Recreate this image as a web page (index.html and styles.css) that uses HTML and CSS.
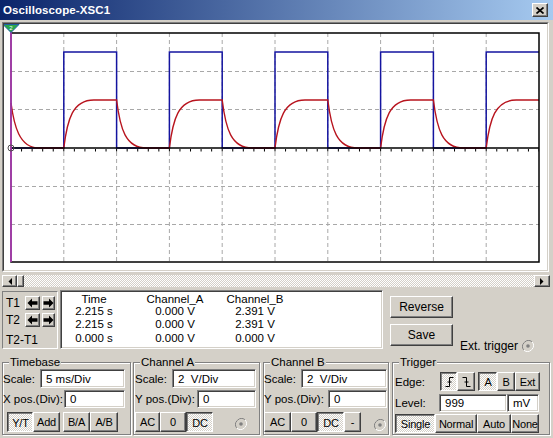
FILE: index.html
```html
<!DOCTYPE html>
<html>
<head>
<meta charset="utf-8">
<title>Oscilloscope-XSC1</title>
<link rel="stylesheet" href="styles.css">
</head>
<body>
<div class="window">
  <div class="titlebar">
    <span class="title">Oscilloscope-XSC1</span>
    <span class="closebtn"><svg width="8" height="7" viewBox="0 0 8 7"><path d="M0.5 0.5L7.5 6.5M7.5 0.5L0.5 6.5" stroke="#000" stroke-width="1.7" fill="none"/></svg></span>
  </div>

  <div class="scope">
    <div class="scope-inner">
      <svg class="plot" width="543" height="246" viewBox="0 0 543 246">
        <g stroke="#a8a8a8" stroke-width="1" stroke-dasharray="4 3" fill="none">
          <path d="M59.8 9V238M112.6 9V238M165.4 9V238M218.2 9V238M271 9V238M323.8 9V238M376.6 9V238M429.4 9V238M482.2 9V238"/>
          <path d="M7 47.5H535M7 85.5H535M7 162.5H535M7 200.5H535"/>
        </g>
        <path fill="none" stroke="#1414a0" stroke-width="1.5" d="M7 124H59.8V28H112.6V124H165.4V28H218.2V124H271V28H323.8V124H376.6V28H429.4V124H482.2V28H535"/>
        <path fill="none" stroke="#b8141e" stroke-width="1.4" d="M7 79C10 101 15 124 35 124L59.8 124C63.3 95.2 68.8 76 89.8 76L112.6 76C116.1 104.8 121.6 124 142.6 124L165.4 124C168.9 95.2 174.4 76 195.4 76L218.2 76C221.7 104.8 227.2 124 248.2 124L271 124C274.5 95.2 280 76 301 76L323.8 76C327.3 104.8 332.8 124 353.8 124L376.6 124C380.1 95.2 385.6 76 406.6 76L429.4 76C432.9 104.8 438.4 124 459.4 124L482.2 124C485.7 95.2 491.2 76 512.2 76L535 76"/>
        <path d="M7 124H535" stroke="#000" stroke-width="1.5"/>
        <path d="M6.5 126.2H535" stroke="#000" stroke-width="2.6" stroke-dasharray="1 9.56"/>
        <rect x="7" y="9" width="528" height="229" fill="none" stroke="#000" stroke-width="1.5"/>
        <path d="M7 1V238" stroke="#c040c8" stroke-width="1.5"/>
        <circle cx="7" cy="124" r="3" fill="none" stroke="#505050" stroke-width="1"/>
        <polygon points="-1,0.5 15,0.5 7,8.5" fill="#2aa84a" stroke="#2060a8" stroke-width="1"/>
        <text x="7" y="6" font-size="6" font-family="Liberation Sans, sans-serif" fill="#fff" text-anchor="middle">2</text>
      </svg>
    </div>
  </div>

  <div class="hscroll">
    <span class="sbtn sleft"><svg width="4" height="7" viewBox="0 0 4 7"><polygon points="4,0 4,7 0.5,3.5" fill="#000"/></svg></span>
    <span class="sthumb"></span>
    <span class="strack"></span>
    <span class="sbtn sright"><svg width="4" height="7" viewBox="0 0 4 7"><polygon points="0,0 0,7 3.5,3.5" fill="#000"/></svg></span>
  </div>

  <div class="cursors">
    <div class="tpanel">
      <span class="tlbl">T1</span>
      <span class="btn abtn"><svg width="11" height="10" viewBox="0 0 11 10"><path d="M0.5 5L5 0.5V3.3H10.5V6.7H5V9.5Z" fill="#000"/></svg></span>
      <span class="btn abtn abtn2"><svg width="11" height="10" viewBox="0 0 11 10"><path d="M10.5 5L6 0.5V3.3H0.5V6.7H6V9.5Z" fill="#000"/></svg></span>
      <span class="tlbl">T2</span>
      <span class="btn abtn"><svg width="11" height="10" viewBox="0 0 11 10"><path d="M0.5 5L5 0.5V3.3H10.5V6.7H5V9.5Z" fill="#000"/></svg></span>
      <span class="btn abtn abtn2"><svg width="11" height="10" viewBox="0 0 11 10"><path d="M10.5 5L6 0.5V3.3H0.5V6.7H6V9.5Z" fill="#000"/></svg></span>
      <span class="tdiff">T2-T1</span>
    </div>
    <div class="readout">
      <span>Time</span><span>Channel_A</span><span>Channel_B</span>
      <span>2.215 s</span><span>0.000 V</span><span>2.391 V</span>
      <span>2.215 s</span><span>0.000 V</span><span>2.391 V</span>
      <span>0.000 s</span><span>0.000 V</span><span>0.000 V</span>
    </div>
    <div class="actions">
      <span class="btn abig">Reverse</span>
      <span class="spacer"></span>
      <span class="btn abig">Save</span>
      <span class="ext">Ext. trigger <span class="radio"><svg width="12" height="12" viewBox="0 0 12 12"><path d="M10.2 1.8A6 6 0 0 0 1.8 10.2" stroke="#808080" fill="none"/><path d="M1.8 10.2A6 6 0 0 0 10.2 1.8" stroke="#fff" fill="none"/><circle cx="6" cy="6" r="4.6" fill="#d4d0c8"/><circle cx="6" cy="6" r="1.8" fill="#808080"/></svg></span></span>
    </div>
  </div>

  <div class="controls">
    <div class="group g-tb">
      <span class="legend">Timebase</span>
      <div class="row r1"><span>Scale:</span><span class="field w85">5 ms/Div</span></div>
      <div class="row r2"><span>X pos.(Div):</span><span class="field w61">0</span></div>
      <div class="row r3 tb-btns">
        <span class="btn on w26">Y/T</span><span class="btn w27">Add</span><span class="btn w27 gap3">B/A</span><span class="btn w28">A/B</span>
      </div>
    </div>
    <div class="group g-ca">
      <span class="legend">Channel A</span>
      <div class="row r1"><span>Scale:</span><span class="field w84">2&nbsp; V/Div</span></div>
      <div class="row r2"><span>Y pos.(Div):</span><span class="field w59">0</span></div>
      <div class="row r3">
        <span class="btn w25">AC</span><span class="btn w26">0</span><span class="btn on w27">DC</span>
        <span class="radio ra"><svg width="12" height="12" viewBox="0 0 12 12"><path d="M10.2 1.8A6 6 0 0 0 1.8 10.2" stroke="#808080" fill="none"/><path d="M1.8 10.2A6 6 0 0 0 10.2 1.8" stroke="#fff" fill="none"/><circle cx="6" cy="6" r="4.6" fill="#d4d0c8"/><circle cx="6" cy="6" r="1.8" fill="#808080"/></svg></span>
      </div>
    </div>
    <div class="group g-cb">
      <span class="legend">Channel B</span>
      <div class="row r1"><span>Scale:</span><span class="field w86">2&nbsp; V/Div</span></div>
      <div class="row r2"><span>Y pos.(Div):</span><span class="field w59">0</span></div>
      <div class="row r3">
        <span class="btn w27">AC</span><span class="btn w26">0</span><span class="btn on w27">DC</span><span class="btn w17">-</span>
        <span class="radio rb"><svg width="12" height="12" viewBox="0 0 12 12"><path d="M10.2 1.8A6 6 0 0 0 1.8 10.2" stroke="#808080" fill="none"/><path d="M1.8 10.2A6 6 0 0 0 10.2 1.8" stroke="#fff" fill="none"/><circle cx="6" cy="6" r="4.6" fill="#d4d0c8"/><circle cx="6" cy="6" r="1.8" fill="#808080"/></svg></span>
      </div>
    </div>
    <div class="group g-tr">
      <span class="legend">Trigger</span>
      <div class="row t1">
        <span class="tl">Edge:</span>
        <span class="btn on w17"><svg width="9" height="10" viewBox="0 0 9 10"><path d="M0.5 9.5H4.5V0.5H8.5M2.5 5H6.5" stroke="#000" stroke-width="1" fill="none"/></svg></span>
        <span class="btn w18"><svg width="9" height="10" viewBox="0 0 9 10"><path d="M0.5 0.5H4.5V9.5H8.5M2.5 5H6.5" stroke="#000" stroke-width="1" fill="none"/></svg></span>
        <span class="btn on w19 gap3">A</span><span class="btn w18">B</span><span class="btn w25">Ext</span>
      </div>
      <div class="row t2">
        <span class="tl tl2">Level:</span>
        <span class="field w68">999</span><span class="field w32">mV</span>
      </div>
      <div class="row t3">
        <span class="btn on w40">Single</span><span class="btn w42">Normal</span><span class="btn w34">Auto</span><span class="btn w28">None</span>
      </div>
    </div>
  </div>
</div>
</body>
</html>
```

FILE: styles.css
```css
html, body {
  margin: 0;
  padding: 0;
  background: #d4d0c8;
}

.window {
  width: 553px;
  height: 438px;
  overflow: hidden;
  background: #d4d0c8;
  font-family: "Liberation Sans", Arial, sans-serif;
  font-size: 11px;
  color: #000;
}

/* Title bar */
.titlebar {
  height: 20px;
  box-sizing: border-box;
  padding: 0 5px 0 3px;
  display: flex;
  align-items: center;
  justify-content: space-between;
  background: linear-gradient(to right, #0a246a, #a6caf0);
}

.title {
  color: #fff;
  font-weight: bold;
  font-size: 11.5px;
  letter-spacing: 0.1px;
}

.closebtn {
  width: 16px;
  height: 14px;
  box-sizing: border-box;
  display: flex;
  align-items: center;
  justify-content: center;
  background: #d4d0c8;
  border: 1px solid;
  border-color: #fff #404040 #404040 #fff;
  box-shadow: inset -1px -1px #808080;
}

/* Scope */
.scope {
  margin: 2px 4px 0 2px;
  height: 250px;
  box-sizing: border-box;
  border: 1px solid;
  border-color: #808080 #fff #fff #808080;
}

.scope-inner {
  height: 100%;
  box-sizing: border-box;
  border: 1px solid;
  border-color: #404040 #d4d0c8 #d4d0c8 #404040;
  background: #fff;
}

.plot {
  display: block;
}

/* Horizontal scrollbar */
.hscroll {
  margin: 3px 3px 0 2px;
  height: 12px;
  display: flex;
}

.sbtn, .sthumb {
  box-sizing: border-box;
  background: #d4d0c8;
  border: 1px solid;
  border-color: #fff #404040 #404040 #fff;
  box-shadow: inset -1px -1px #808080;
  display: flex;
  align-items: center;
  justify-content: center;
}

.sleft { width: 15px; }
.sright { width: 16px; }
.sthumb { width: 7px; }

.strack {
  flex: 1;
  background: repeating-conic-gradient(#fff 0 25%, #d4d0c8 0 50%) 0 0 / 2px 2px;
}

/* Generic button */
.btn {
  box-sizing: border-box;
  display: flex;
  align-items: center;
  justify-content: center;
  background: #d4d0c8;
  border: 1px solid;
  border-color: #fff #404040 #404040 #fff;
  box-shadow: inset -1px -1px #808080;
  height: 100%;
  white-space: nowrap;
  flex: none;
}

.btn.on {
  border-color: #404040 #fff #fff #404040;
  box-shadow: inset 1px 1px #808080;
  background: repeating-conic-gradient(#fff 0 25%, #d4d0c8 0 50%) 0 0 / 2px 2px;
  padding: 1px 0 0 1px;
}

/* Cursor readout row */
.cursors {
  display: flex;
  margin-top: 3px;
  height: 59px;
  padding-left: 2px;
}

.tpanel {
  width: 56px;
  margin-top: 1px;
  height: 58px;
  box-sizing: border-box;
  border: 1px solid;
  border-color: #808080 #fff #fff #808080;
  padding: 4px 0 0 3px;
  display: grid;
  grid-template-columns: 19px 15px 15px;
  grid-template-rows: 14px 14px 1fr;
  row-gap: 3px;
  font-size: 12px;
}

.tlbl {
  display: flex;
  align-items: center;
}

.abtn {
  height: 14px;
}

.abtn2 {
  margin-left: 2px;
}

.tdiff {
  grid-column: 1 / 4;
  align-self: center;
  margin-top: 1px;
}

.readout {
  width: 323px;
  height: 59px;
  margin-left: 2px;
  box-sizing: border-box;
  border: 1px solid;
  border-color: #808080 #fff #fff #808080;
  box-shadow: inset 1px 1px #404040, inset -1px -1px #d4d0c8;
  background: #fff;
  padding-top: 1px;
  display: grid;
  grid-template-columns: 66px 96px 64px;
  grid-template-rows: 13px 12px 14px 14px;
  align-items: center;
  justify-items: center;
  font-size: 11.5px;
}

.actions {
  margin-left: 7px;
  padding-top: 6px;
  display: grid;
  grid-template-columns: 63px auto;
  grid-template-rows: 22px 6px 22px;
  column-gap: 7px;
  font-size: 12px;
}

.abig {
  grid-column: 1;
  height: 22px;
}

.spacer {
  grid-column: 1;
}

.ext {
  grid-column: 2;
  grid-row: 3;
  align-self: end;
  display: flex;
  align-items: center;
  gap: 4px;
  margin-bottom: -7px;
  white-space: nowrap;
}

.radio {
  width: 12px;
  height: 12px;
  display: block;
  flex: none;
}

.radio svg {
  display: block;
}

/* Control groups */
.controls {
  display: flex;
  margin-top: 13px;
  padding-left: 2px;
  font-size: 11.5px;
}

.controls .btn {
  font-size: 11px;
  letter-spacing: -0.2px;
}

.group {
  position: relative;
  box-sizing: border-box;
  height: 73px;
  border: 1px solid #808080;
  box-shadow: inset 1px 1px #fff, 1px 1px #fff;
  padding-top: 6px;
}

.legend {
  position: absolute;
  top: -8px;
  left: 6px;
  padding: 0 1px;
  background: #d4d0c8;
  line-height: 14px;
  white-space: nowrap;
}

.g-tb { width: 129px; padding-right: 5px; }
.g-ca { width: 127px; margin-left: 2px; padding-left: 1px; padding-right: 3px; }
.g-cb { width: 126px; margin-left: 3px; padding-right: 1px; }
.g-tr { width: 158px; margin-left: 3px; padding-left: 2px; padding-top: 9px; }

.row {
  display: flex;
  align-items: center;
  white-space: nowrap;
}

.r1 { height: 19px; }
.r2 { height: 18px; margin-top: 2px; }
.r3 { height: 20px; margin-top: 4px; }

.r1 .field, .r2 .field { margin-left: auto; flex: none; }

.tb-btns { padding-left: 4px; }

.field {
  box-sizing: border-box;
  height: 100%;
  display: flex;
  align-items: center;
  padding-left: 5px;
  background: #fff;
  border: 1px solid;
  border-color: #808080 #fff #fff #808080;
  box-shadow: inset 1px 1px #404040, inset -1px -1px #d4d0c8;
  white-space: nowrap;
}

.t1 { height: 19px; }
.t2 { height: 18px; margin-top: 3px; }
.t3 { height: 19px; margin-top: 2px; }

.tl { width: 45px; flex: none; }
.tl2 { width: 44px; }

.ra { margin-left: auto; margin-right: 9px; margin-top: 3px; }
.rb { margin-left: auto; margin-right: 1px; margin-top: 6px; }

.gap3 { margin-left: 3px; }

.w17 { width: 17px; }
.w18 { width: 18px; }
.w19 { width: 19px; }
.w25 { width: 25px; }
.w26 { width: 26px; }
.w27 { width: 27px; }
.w28 { width: 28px; }
.w32 { width: 32px; }
.w34 { width: 34px; }
.w40 { width: 40px; }
.w42 { width: 42px; }
.w59 { width: 59px; }
.w61 { width: 61px; }
.w68 { width: 68px; }
.w84 { width: 84px; }
.w85 { width: 85px; }
.w86 { width: 86px; }
```
